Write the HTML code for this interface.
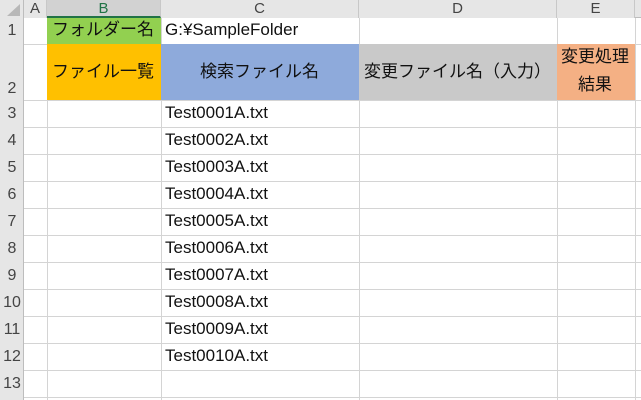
<!DOCTYPE html>
<html><head><meta charset="utf-8"><style>
body{margin:0;width:641px;height:400px;overflow:hidden;background:#fff;font-family:"Liberation Sans","Noto Sans CJK JP",sans-serif;position:relative}
.a{position:absolute;box-sizing:border-box}
.h{background:#e6e6e6;color:#444;font-size:15px;text-align:center}
.vl{position:absolute;top:18px;bottom:0;width:1px;background:#d4d4d4}
.hl{position:absolute;left:24px;right:0;height:1px;background:#d4d4d4}
.t{position:absolute;font-size:17px;color:#111;white-space:nowrap;line-height:20px}
.rn{position:absolute;left:0;width:24px;text-align:center;font-size:16px;color:#444;line-height:18px}
</style></head><body>
<div class="a h" style="left:0;top:0;width:641px;height:18px;border-bottom:1px solid #bdbdbd"></div>
<div class="a" style="left:0;top:0;width:24px;height:400px;background:#e6e6e6;border-right:1px solid #bdbdbd"></div>
<svg class="a" style="left:4px;top:3px" width="18" height="14"><polygon points="16,1 16,13 3,13" fill="#b8b8b8"/></svg>
<div class="a h" style="left:24px;top:0;width:23px;height:18px;line-height:18px;border-right:1px solid #c8c8c8">A</div>
<div class="a h" style="left:47px;top:0;width:114px;height:18px;line-height:17px;background:#d2d2d2;border-bottom:2px solid #217346;border-right:1px solid #c8c8c8;color:#217346">B</div>
<div class="a h" style="left:161px;top:0;width:198px;height:18px;line-height:18px;border-right:1px solid #c8c8c8">C</div>
<div class="a h" style="left:359px;top:0;width:198px;height:18px;line-height:18px;border-right:1px solid #c8c8c8">D</div>
<div class="a h" style="left:557px;top:0;width:78px;height:18px;line-height:18px;border-right:1px solid #c8c8c8">E</div>
<div class="vl" style="left:47px"></div><div class="vl" style="left:161px"></div><div class="vl" style="left:359px"></div><div class="vl" style="left:557px"></div><div class="vl" style="left:635px"></div>
<div class="hl" style="top:44px"></div><div class="hl" style="top:100px"></div>
<div class="hl" style="top:127px"></div><div class="hl" style="top:154px"></div><div class="hl" style="top:181px"></div><div class="hl" style="top:208px"></div><div class="hl" style="top:235px"></div><div class="hl" style="top:262px"></div><div class="hl" style="top:289px"></div><div class="hl" style="top:316px"></div><div class="hl" style="top:343px"></div><div class="hl" style="top:370px"></div><div class="hl" style="top:397px"></div>
<div class="a" style="left:47px;top:18px;width:114px;height:26px;background:#92d050"></div>
<div class="a" style="left:47px;top:44px;width:114px;height:56px;background:#ffc000"></div>
<div class="a" style="left:161px;top:44px;width:198px;height:56px;background:#8eaadb"></div>
<div class="a" style="left:359px;top:44px;width:198px;height:56px;background:#c9c9c9"></div>
<div class="a" style="left:557px;top:44px;width:78px;height:56px;background:#f4b084"></div>
<div class="t" style="left:52px;top:20px">フォルダー名</div>
<div class="t" style="left:165px;top:20px">G:¥SampleFolder</div>
<div class="t" style="left:52px;top:62px">ファイル一覧</div>
<div class="t" style="left:200px;top:62px">検索ファイル名</div>
<div class="t" style="left:364px;top:62px">変更ファイル名（入力）</div>
<div class="t" style="left:561px;top:47px">変更処理</div>
<div class="t" style="left:578px;top:75px">結果</div>
<div class="rn" style="top:22px">1</div><div class="rn" style="top:80px">2</div>
<div class="rn" style="top:105px">3</div><div class="rn" style="top:132px">4</div><div class="rn" style="top:159px">5</div><div class="rn" style="top:186px">6</div><div class="rn" style="top:213px">7</div><div class="rn" style="top:240px">8</div><div class="rn" style="top:267px">9</div><div class="rn" style="top:294px">10</div><div class="rn" style="top:321px">11</div><div class="rn" style="top:348px">12</div><div class="rn" style="top:375px">13</div>
<div class="t" style="left:165px;top:103px">Test0001A.txt</div>
<div class="t" style="left:165px;top:130px">Test0002A.txt</div>
<div class="t" style="left:165px;top:157px">Test0003A.txt</div>
<div class="t" style="left:165px;top:184px">Test0004A.txt</div>
<div class="t" style="left:165px;top:211px">Test0005A.txt</div>
<div class="t" style="left:165px;top:238px">Test0006A.txt</div>
<div class="t" style="left:165px;top:265px">Test0007A.txt</div>
<div class="t" style="left:165px;top:292px">Test0008A.txt</div>
<div class="t" style="left:165px;top:319px">Test0009A.txt</div>
<div class="t" style="left:165px;top:346px">Test0010A.txt</div>
</body></html>
